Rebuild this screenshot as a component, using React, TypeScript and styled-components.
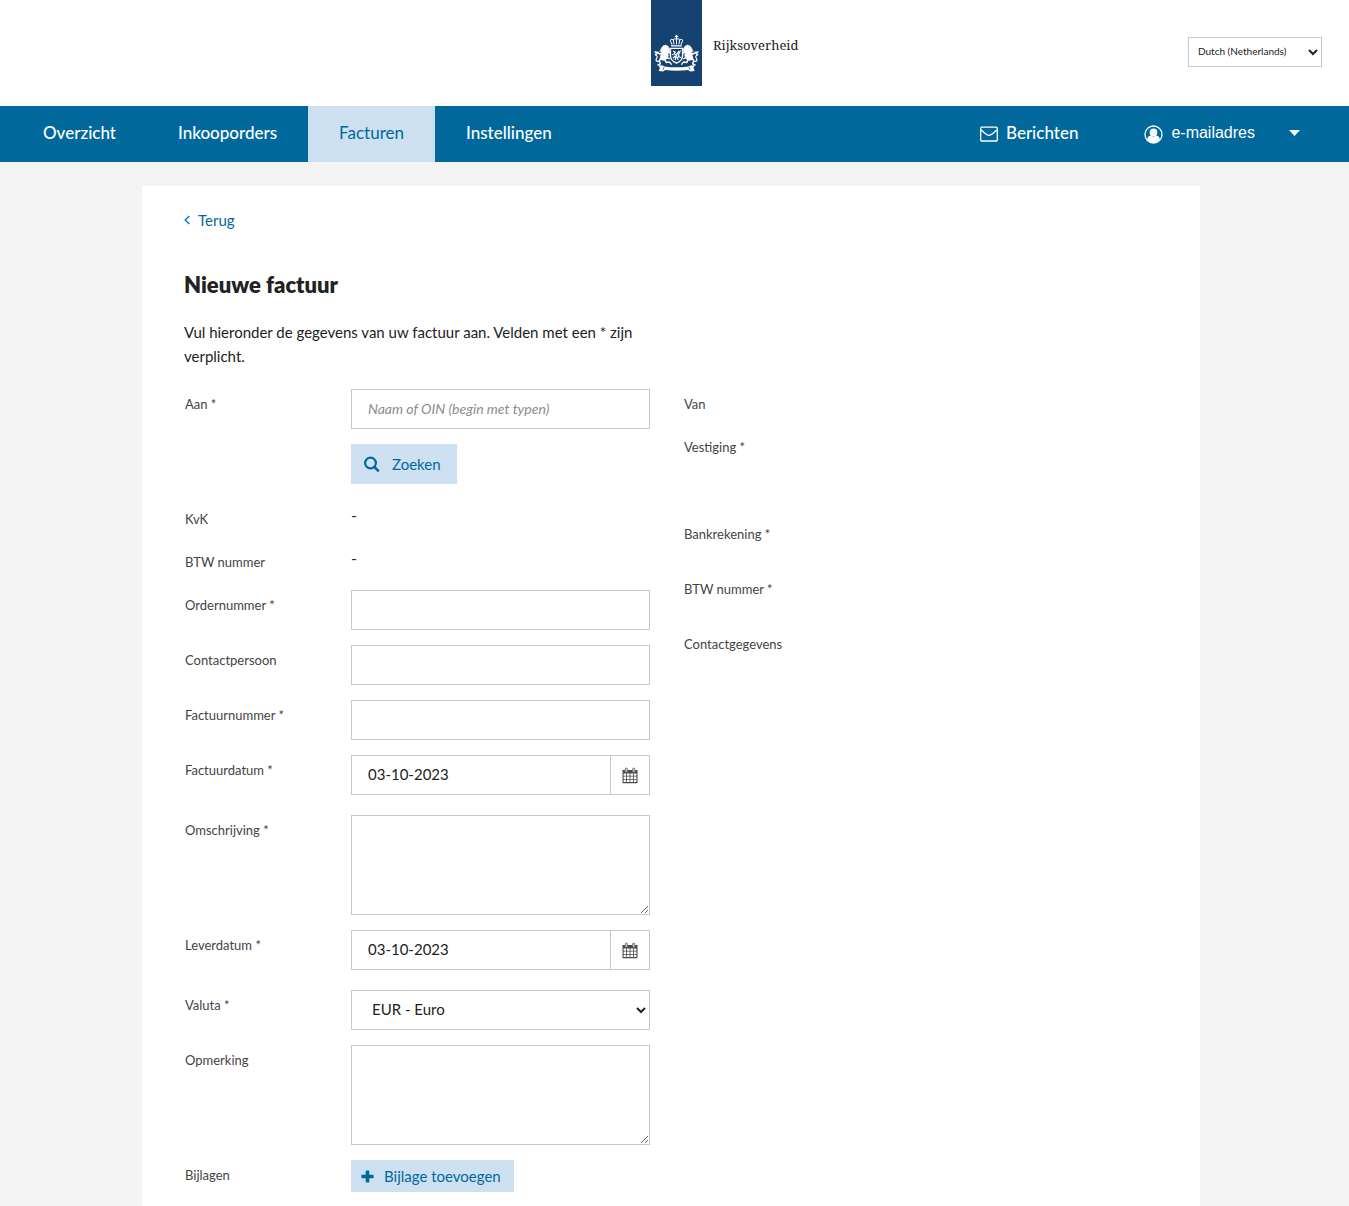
import React from "react";
import styled, { createGlobalStyle } from "styled-components";

const colors = {
  bar: "#01689b",
  light: "#cce0f1",
  text: "#222222",
  label: "#444444",
  border: "#c8c8c8",
  emblem: "#154273",
};

const GlobalStyle = createGlobalStyle`
  *, *::before, *::after { box-sizing: border-box; }
  body {
    margin: 0;
    background: #f3f3f3;
    color: ${colors.text};
    font-family: Lato, "Noto Sans", sans-serif;
    font-size: 15px;
    line-height: 24px;
  }
  button, input, select, textarea { font: inherit; color: inherit; margin: 0; border-radius: 0; }
  p, h1 { margin: 0; }
`;

const Header = styled.header`
  display: grid;
  grid-template-columns: 1fr 51px 1fr;
  height: 106px;
  padding-left: 4px;
  background: #fff;
`;

const Ribbon = styled.svg`
  grid-column: 2;
  display: block;
  width: 51px;
  height: 86px;
`;

const HeaderEnd = styled.div`
  display: flex;
  justify-content: space-between;
  align-items: flex-start;
  padding: 37px 27px 0 11px;
`;

const Wordmark = styled.span`
  font-family: "Noto Serif", "Liberation Serif", serif;
  font-size: 13px;
  line-height: 16px;
`;

const LanguageSelect = styled.select`
  width: 134px;
  height: 30px;
  padding: 0 0 2px 5px;
  border: 1px solid ${colors.border};
  background: #fff;
  font-size: 10px;
`;

const Nav = styled.nav`
  display: flex;
  height: 56px;
  padding: 0 49px 0 12px;
  background: ${colors.bar};
  color: #fff;
`;

const NavLink = styled.a<{ $active?: boolean }>`
  padding: 15px 31px;
  font-size: 17px;
  font-weight: ${(p) => (p.$active ? 400 : 500)};
  color: ${(p) => (p.$active ? colors.bar : "#fff")};
  background: ${(p) => (p.$active ? colors.light : "transparent")};
  text-decoration: none;
`;

const NavTools = styled.div`
  display: flex;
  align-items: flex-start;
  gap: 66px;
  margin-left: auto;
  padding-top: 15px;
`;

const ToolLink = styled.a`
  display: flex;
  align-items: center;
  gap: 8px;
  font-size: 17px;
  font-weight: 500;
  color: #fff;
  text-decoration: none;
`;

const AccountButton = styled.button`
  display: flex;
  align-items: center;
  gap: 8px;
  padding: 0;
  border: 0;
  background: none;
  font-family: "Liberation Sans", Arial, sans-serif;
  font-size: 16px;
  color: #fff;
`;

const ToolIcon = styled.svg`
  margin-top: 2px;
`;

const Caret = styled.svg`
  margin-left: 26px;
`;

const Main = styled.main`
  padding: 24px 7px 0 0;
`;

const Card = styled.div`
  max-width: 1058px;
  margin: 0 auto;
  padding: 22px 42px 14px;
  background: #fff;
`;

const BackLink = styled.a`
  display: flex;
  align-items: center;
  gap: 8px;
  width: fit-content;
  color: ${colors.bar};
  text-decoration: none;
`;

const Title = styled.h1`
  margin-top: 37px;
  font-size: 22px;
  line-height: 32px;
  font-weight: 800;
`;

const Intro = styled.p`
  max-width: 466px;
  margin-top: 19px;
`;

const Form = styled.form`
  display: grid;
  grid-template-columns: 466fr 474fr;
  column-gap: 34px;
  align-items: start;
  margin-top: 21px;
`;

const Column = styled.div`
  display: flex;
  flex-direction: column;
  gap: 15px;
`;

const Row = styled.div<{ $height?: number; $spaced?: boolean }>`
  display: grid;
  grid-template-columns: 167px 1fr;
  align-items: start;
  min-height: ${(p) => p.$height ?? 40}px;
  padding-bottom: ${(p) => (p.$spaced ? 5 : 0)}px;
`;

const Label = styled.label<{ $inset?: boolean }>`
  padding: 3px 0 0 ${(p) => (p.$inset ? 1 : 0)}px;
  font-size: 13px;
  color: ${colors.label};
`;

const Value = styled.span`
  font-size: 16px;
  line-height: 22px;
`;

const Stack = styled.div`
  display: flex;
  flex-direction: column;
  align-items: flex-start;
  gap: 15px;
`;

const TextInput = styled.input`
  width: 100%;
  min-width: 0;
  height: 40px;
  padding: 0 16px 2px;
  border: 1px solid ${colors.border};
  background: #fff;
  &::placeholder {
    color: #8c8c8c;
    font-size: 14px;
    font-style: italic;
    opacity: 1;
  }
`;

const TextArea = styled.textarea`
  display: block;
  width: 100%;
  height: 100px;
  padding: 8px 16px;
  border: 1px solid ${colors.border};
  background: #fff;
`;

const CurrencySelect = styled.select`
  width: 100%;
  height: 40px;
  padding: 0 0 2px 16px;
  border: 1px solid ${colors.border};
  background: #fff;
`;

const DateGroup = styled.div`
  display: flex;
`;

const DateButton = styled.button`
  display: flex;
  flex: none;
  align-items: center;
  justify-content: center;
  width: 39px;
  height: 40px;
  padding: 0;
  border: 1px solid ${colors.border};
  border-left: 0;
  background: #fff;
`;

const ActionButton = styled.button<{ $compact?: boolean }>`
  display: inline-flex;
  align-items: center;
  justify-self: start;
  gap: ${(p) => (p.$compact ? 10 : 12)}px;
  height: ${(p) => (p.$compact ? 32 : 40)}px;
  padding: ${(p) => (p.$compact ? "0 13px 0 10px" : "0 16px 0 13px")};
  border: 0;
  background: ${colors.light};
  color: ${colors.bar};
`;

function Emblem() {
  return (
    <Ribbon viewBox="0 0 51 86" role="img" aria-label="Rijkswapen">
      <rect width="51" height="86" fill={colors.emblem} />
      <g fill="none" stroke="#fff" strokeLinecap="round" strokeLinejoin="round">
        <path
          d="M21 44.500 19.200 40.200q1.400-1.800 3.200-.2M30 44.500l1.800-4.300q-1.400-1.800-3.200-.2M23 44l-.7-4.500q1.600-1.600 3.200-.2 1.600-1.400 3.200.2L28 44M25.500 44v-7"
          strokeWidth="1"
        />
        <path d="M20.500 45.800h10M25.500 35.400v2.600M24.400 36.500h2.200" strokeWidth="1.300" />
        <path d="M19.400 48.400h12.200v7q0 5.200-6.100 7.800-6.100-2.600-6.100-7.800z" strokeWidth="1.400" />
        <path
          d="M22.600 51.300l1.600 1-1 1.600 2.300.8 2.300-3.200 1 .8-1.400 2.500.9 2-2 .4.6 2.200M24.300 56l-1.900 1.800M25.500 55l-1.200 4.600M21.600 54.600h.3M29.400 50.800h.1M29.500 57.300h.1"
          strokeWidth="1.300"
        />
      </g>
      {[undefined, "translate(51 0) scale(-1 1)"].map((transform, i) => (
        <g key={i} transform={transform} fill="#fff" stroke="#fff" strokeLinecap="round" strokeLinejoin="round">
          <path
            d="M10.500 48l1.600-2.200 2.700-.7 2.500 1.300 1.300 2.800-.2 2.400-1.600 1.400.6 2.700-1.400 3-2.700 1.700-2.900-.5-1.300-2.700.9-2.600 1.400-2.200-2.400-.8z"
            strokeWidth=".5"
          />
          <path
            d="M12 52.800l-3.400 1.200-2-1.800M6.800 52.400l-2.800-.4M6 53.400l-1.600 1.200M16 51.600l2.600 1.400M15.200 57l3 1.600M10.500 57.500l-2.200 3 1 3.300-2.300 1.200M14 59.600l1.200 2.900 3.200-.6 1.800 2.200"
            fill="none"
            strokeWidth="1.500"
          />
          <path d="M8.500 61.500q-3.600.2-3.400-1.800.2-1.400 1-2.400.6-1.200-1.200-2" fill="none" strokeWidth="1.200" />
        </g>
      ))}
      <path
        d="M7.500 65.200l4.200.4 1.700.8q12.100 1.700 24.200 0l1.700-.8 4.200-.4-1 2.700 1.200 3.200-4.800.3-1.500-1.500q-11.700 1.600-23.400 0l-1.500 1.500-4.800-.3 1.200-3.200z"
        fill="#fff"
      />
      <path d="M12.200 69.600l.8-2.400M38.800 69.600l-.8-2.400" stroke={colors.emblem} strokeWidth=".7" />
    </Ribbon>
  );
}

function EnvelopeIcon() {
  return (
    <ToolIcon width="18" height="16" viewBox="0 0 18 16" fill="none" stroke="#fff" strokeWidth="1.300" strokeLinejoin="round" aria-hidden="true">
      <rect x=".7" y="1.200" width="16.600" height="13.800" rx="1" />
      <path d="M1 3.800c2.600 2.200 5.500 5.700 8 5.700s5.400-3.500 8-5.700" />
    </ToolIcon>
  );
}

function UserIcon() {
  return (
    <ToolIcon width="19" height="19" viewBox="0 0 19 19" aria-hidden="true">
      <circle cx="9.500" cy="9.500" r="8.500" fill="none" stroke="#fff" strokeWidth="1.300" />
      <ellipse cx="9.500" cy="7.600" rx="3.800" ry="4" fill="#fff" />
      <path d="M3 14.600c.4-2.200 1.600-3.700 3.500-4.100q3 2.200 6 0c1.900.4 3.100 1.900 3.500 4.100a8.600 8.600 0 0 1-13 0z" fill="#fff" />
    </ToolIcon>
  );
}

function SearchIcon() {
  return (
    <svg width="16" height="16" viewBox="0 0 16 16" fill="none" stroke="currentColor" aria-hidden="true">
      <circle cx="6.500" cy="7" r="5.400" strokeWidth="2.200" />
      <path d="M10.600 11.200l3.400 3.400" strokeWidth="2.600" strokeLinecap="round" />
    </svg>
  );
}

function PlusIcon() {
  return (
    <svg width="13" height="13" viewBox="0 0 13 13" aria-hidden="true">
      <path
        d="M5.500.5h2q.8 0 .8.800v3.500h3.500q.8 0 .8.800v1.800q0 .8-.8.800H8.300v3.500q0 .8-.8.800h-2q-.8 0-.8-.8V8.200H1.200q-.8 0-.8-.8V5.600q0-.8.8-.8h3.500V1.300q0-.8.8-.8z"
        fill="currentColor"
      />
    </svg>
  );
}

function CalendarIcon() {
  return (
    <svg width="16" height="17" viewBox="0 0 16 17" aria-hidden="true">
      <path d="M.5 3h15v12.500q0 .8-.8.8H1.300q-.8 0-.8-.8z" fill="#4a4a4a" />
      <path
        d="M1.600 6.500h2.600v2.300H1.600zM5 6.500h2.600v2.300H5zM8.400 6.500H11v2.300H8.400zM11.800 6.500h2.600v2.300h-2.600zM1.600 9.600h2.600v2.300H1.600zM5 9.600h2.600v2.300H5zM8.400 9.600H11v2.300H8.400zM11.800 9.600h2.600v2.300h-2.600zM1.600 12.700h2.600V15H1.600zM5 12.700h2.600V15H5zM8.400 12.700H11V15H8.400zM11.800 12.700h2.600V15h-2.600z"
        fill="#fff"
      />
      <path d="M4.300 2v2.200M11.700 2v2.200" stroke="#777" strokeWidth="3" strokeLinecap="round" />
      <path d="M4.300 2v2.200M11.700 2v2.200" stroke="#bbb" strokeWidth="1.600" strokeLinecap="round" />
    </svg>
  );
}

function DateField({ id, label }: { id: string; label: string }) {
  return (
    <Row $spaced>
      <Label $inset htmlFor={id}>{label}</Label>
      <DateGroup>
        <TextInput id={id} defaultValue="03-10-2023" />
        <DateButton type="button" aria-label={`${label} kiezen`}>
          <CalendarIcon />
        </DateButton>
      </DateGroup>
    </Row>
  );
}

function TextField({ id, label }: { id: string; label: string }) {
  return (
    <Row>
      <Label $inset htmlFor={id}>{label}</Label>
      <TextInput id={id} />
    </Row>
  );
}

function AreaField({ id, label }: { id: string; label: string }) {
  return (
    <Row>
      <Label $inset htmlFor={id}>{label}</Label>
      <TextArea id={id} />
    </Row>
  );
}

const senderRows = [
  { label: "Van", height: 28 },
  { label: "Vestiging *", height: 72 },
  { label: "Bankrekening *", height: 40 },
  { label: "BTW nummer *", height: 40 },
  { label: "Contactgegevens", height: 40 },
];

export default function App() {
  return (
    <>
      <GlobalStyle />
      <Header>
        <Emblem />
        <HeaderEnd>
          <Wordmark>Rijksoverheid</Wordmark>
          <LanguageSelect aria-label="Taal">
            <option>Dutch (Netherlands)</option>
          </LanguageSelect>
        </HeaderEnd>
      </Header>
      <Nav>
        <NavLink href="#overzicht">Overzicht</NavLink>
        <NavLink href="#inkooporders">Inkooporders</NavLink>
        <NavLink href="#facturen" $active aria-current="page">Facturen</NavLink>
        <NavLink href="#instellingen">Instellingen</NavLink>
        <NavTools>
          <ToolLink href="#berichten">
            <EnvelopeIcon />
            Berichten
          </ToolLink>
          <AccountButton type="button">
            <UserIcon />
            e-mailadres
            <Caret width="11" height="6" viewBox="0 0 11 6" aria-hidden="true">
              <path d="M0 0h11L5.500 6z" fill="#fff" />
            </Caret>
          </AccountButton>
        </NavTools>
      </Nav>
      <Main>
        <Card>
          <BackLink href="#terug">
            <svg width="6" height="10" viewBox="0 0 6 10" fill="none" stroke="#007bc7" strokeWidth="1.400" aria-hidden="true">
              <path d="M5.300 1 1.200 5l4.100 4" />
            </svg>
            Terug
          </BackLink>
          <Title>Nieuwe factuur</Title>
          <Intro>Vul hieronder de gegevens van uw factuur aan. Velden met een * zijn verplicht.</Intro>
          <Form>
            <Column>
              <Row $spaced>
                <Label $inset htmlFor="aan">Aan *</Label>
                <Stack>
                  <TextInput id="aan" placeholder="Naam of OIN (begin met typen)" />
                  <ActionButton type="button">
                    <SearchIcon />
                    Zoeken
                  </ActionButton>
                </Stack>
              </Row>
              <Row $height={28}>
                <Label $inset as="span">KvK</Label>
                <Value>-</Value>
              </Row>
              <Row $height={28}>
                <Label $inset as="span">BTW nummer</Label>
                <Value>-</Value>
              </Row>
              <TextField id="ordernummer" label="Ordernummer *" />
              <TextField id="contactpersoon" label="Contactpersoon" />
              <TextField id="factuurnummer" label="Factuurnummer *" />
              <DateField id="factuurdatum" label="Factuurdatum *" />
              <AreaField id="omschrijving" label="Omschrijving *" />
              <DateField id="leverdatum" label="Leverdatum *" />
              <Row>
                <Label $inset htmlFor="valuta">Valuta *</Label>
                <CurrencySelect id="valuta">
                  <option>EUR - Euro</option>
                </CurrencySelect>
              </Row>
              <AreaField id="opmerking" label="Opmerking" />
              <Row $height={32}>
                <Label $inset as="span">Bijlagen</Label>
                <ActionButton type="button" $compact>
                  <PlusIcon />
                  Bijlage toevoegen
                </ActionButton>
              </Row>
            </Column>
            <Column>
              {senderRows.map((row) => (
                <Row key={row.label} $height={row.height}>
                  <Label as="span">{row.label}</Label>
                </Row>
              ))}
            </Column>
          </Form>
        </Card>
      </Main>
    </>
  );
}
